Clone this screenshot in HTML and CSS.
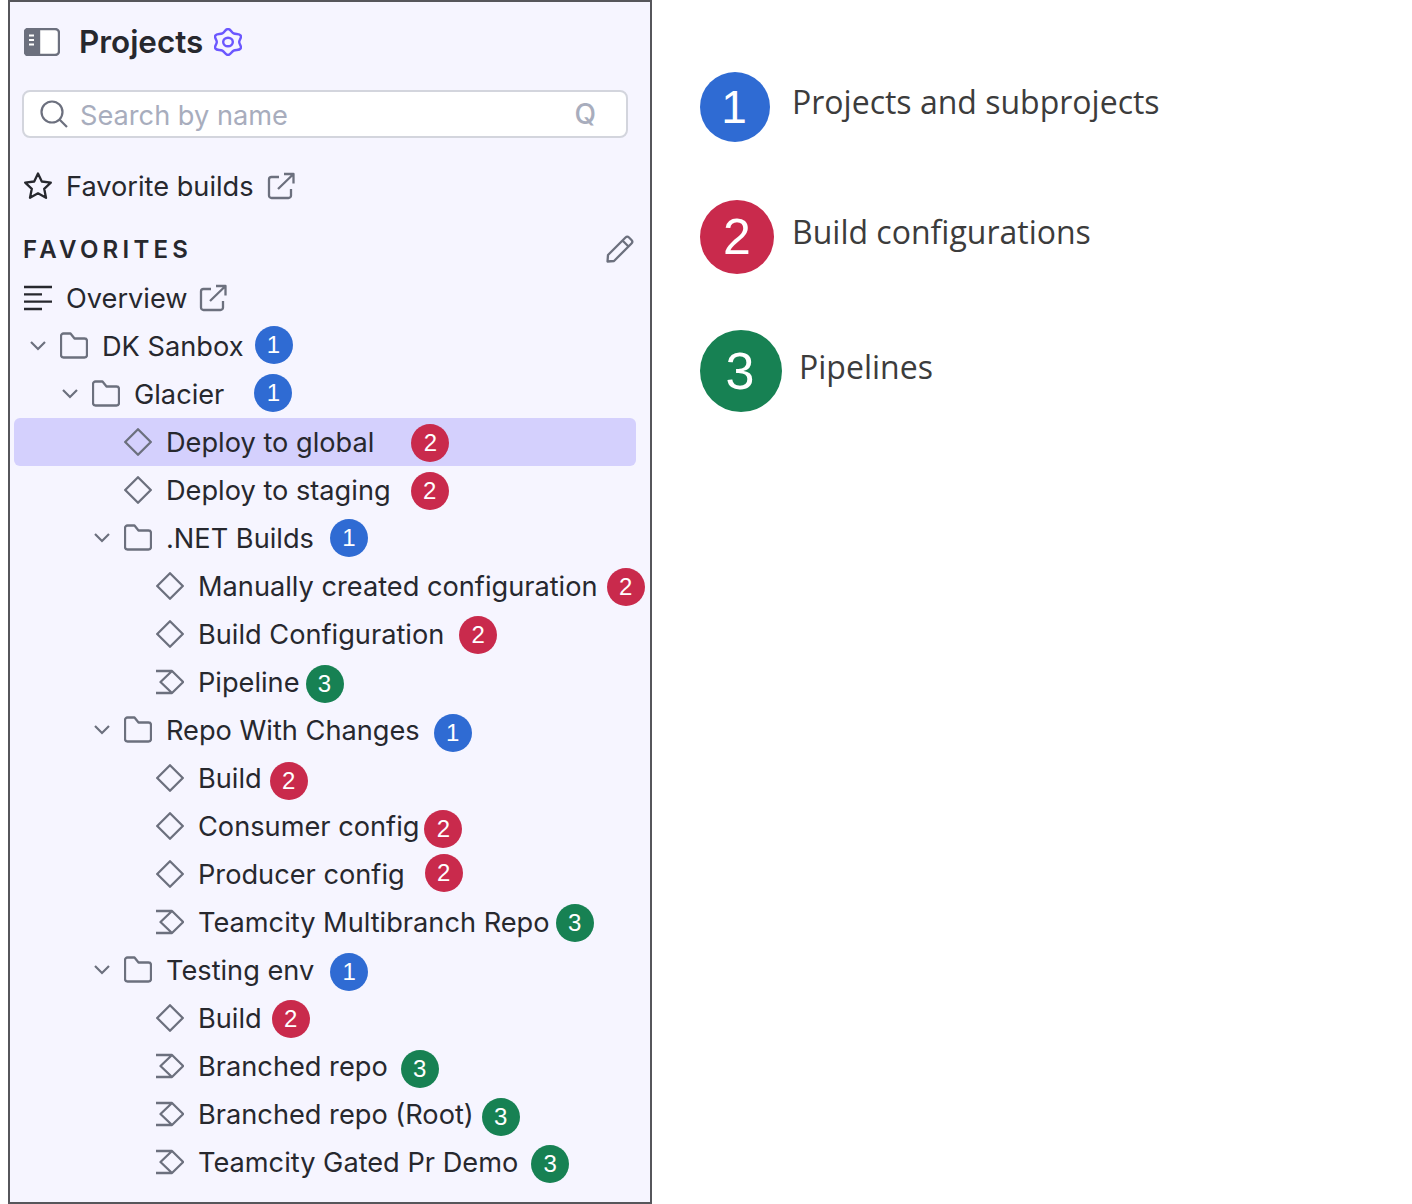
FILE: index.html
```html
<!DOCTYPE html>
<html lang="en">
<head>
<meta charset="utf-8">
<title>Projects</title>
<link rel="stylesheet" href="styles.css">
</head>
<body>
<svg class="defs" width="0" height="0" aria-hidden="true">
  <symbol id="i-diamond" viewBox="0 0 28 28"><path d="M14 1.200 26.800 14 14 26.800 1.200 14Z"/></symbol>
  <symbol id="i-pipe" viewBox="0 0 28 28"><path d="M0 3h16l11.200 11L16 25H0M16 3 4.500 14 16 25"/></symbol>
  <symbol id="i-folder" viewBox="0 0 28 28"><path d="M1 4A2.500 2.500 0 0 1 3.500 1.500H10.500L14.500 6.500H24.500A2.500 2.500 0 0 1 27 9V23a2.500 2.500 0 0 1-2.500 2.500H3.500A2.500 2.500 0 0 1 1 23Z"/></symbol>
  <symbol id="i-chev" viewBox="0 0 16 10"><path d="M1 1l7 7 7-7"/></symbol>
  <symbol id="i-ext" viewBox="0 0 28 28"><path d="M12 5H4.500A2.500 2.500 0 0 0 2 7.500v16A2.500 2.500 0 0 0 4.500 26h17a2.500 2.500 0 0 0 2.500-2.500V17M11 17 26.500 2M17 2h9.500v9.500"/></symbol>
</svg>

<main class="panel">
  <header class="head">
    <svg class="ic-side" viewBox="0 0 36 28"><rect x="1" y="1" width="34" height="26" rx="4" class="side-frame"/><path d="M4 1h11v26H4a3 3 0 0 1-3-3V4a3 3 0 0 1 3-3Z" class="side-fill"/><path d="M5 7.500h5M5 12h5M5 16.500h5" class="side-dots"/></svg>
    <h1 class="title">Projects</h1>
    <svg class="ic-gear" viewBox="-12.500 -14 25 28" preserveAspectRatio="none"><path vector-effect="non-scaling-stroke" d="M0-13C2.500-13 2.830-9.910 5-8.660C7.170-7.410 10.010-8.670 11.260-6.500C12.510-4.330 10-2.500 10 0C10 2.500 12.510 4.330 11.260 6.500C10.010 8.670 7.170 7.410 5 8.660C2.830 9.910 2.500 13 0 13C-2.500 13-2.830 9.910-5 8.660C-7.170 7.410-10.010 8.670-11.260 6.500C-12.510 4.330-10 2.500-10 0C-10-2.500-12.510-4.330-11.260-6.500C-10.010-8.670-7.170-7.410-5-8.660C-2.830-9.910-2.500-13 0-13Z"/><circle vector-effect="non-scaling-stroke" r="4.300"/></svg>
  </header>

  <div class="search">
    <svg class="ic-search" viewBox="0 0 28 28"><circle cx="12" cy="12" r="10.500"/><path d="M19.500 19.500 27 27"/></svg>
    <span class="placeholder">Search by name</span>
    <span class="shortcut">Q</span>
  </div>

  <div class="row top-row">
    <svg class="ic" viewBox="0 0 28 28"><path class="dark" d="M14 1.500l3.800 8 9 1.100-6.600 6.200 1.800 9L14 21.300 6 25.800l1.800-9L1.200 10.600l9-1.100Z"/></svg>
    <span class="label">Favorite builds</span>
    <svg class="ic ext ext-fav"><use href="#i-ext"/></svg>
  </div>

  <div class="section">
    <h2 class="section-title">FAVORITES</h2>
    <svg class="ic-pencil" viewBox="0 0 28 28"><path d="M1.500 26.500l.5-6.500L19.500 2.500a2.500 2.500 0 0 1 3.500 0l2.500 2.500a2.500 2.500 0 0 1 0 3.500L8 26Z M16.500 5.500l6 6"/></svg>
  </div>

  <div class="row top-row">
    <svg class="ic" viewBox="0 0 28 28"><path class="dark" d="M0 3h28M0 10.300h18M0 17.700h28M0 25h18"/></svg>
    <span class="label">Overview</span>
    <svg class="ic ext ext-over"><use href="#i-ext"/></svg>
  </div>

  <div class="row l0"><svg class="chev"><use href="#i-chev"/></svg><svg class="ic"><use href="#i-folder"/></svg><span class="label">DK Sanbox</span><b class="badge blue dx11 up">1</b></div>
  <div class="row l1"><svg class="chev"><use href="#i-chev"/></svg><svg class="ic"><use href="#i-folder"/></svg><span class="label">Glacier</span><b class="badge blue dx30 up">1</b></div>
  <div class="row l2 leaf selected"><svg class="ic"><use href="#i-diamond"/></svg><span class="label">Deploy to global</span><b class="badge red dx37 down">2</b></div>
  <div class="row l2 leaf"><svg class="ic"><use href="#i-diamond"/></svg><span class="label">Deploy to staging</span><b class="badge red dx20 down">2</b></div>
  <div class="row l2"><svg class="chev"><use href="#i-chev"/></svg><svg class="ic"><use href="#i-folder"/></svg><span class="label">.NET Builds</span><b class="badge blue dx16 flat">1</b></div>
  <div class="row l3 leaf"><svg class="ic"><use href="#i-diamond"/></svg><span class="label">Manually created configuration</span><b class="badge red dx9 down">2</b></div>
  <div class="row l3 leaf"><svg class="ic"><use href="#i-diamond"/></svg><span class="label">Build Configuration</span><b class="badge red dx15 down">2</b></div>
  <div class="row l3 leaf"><svg class="ic"><use href="#i-pipe"/></svg><span class="label">Pipeline</span><b class="badge green dx6 down2">3</b></div>
  <div class="row l2"><svg class="chev"><use href="#i-chev"/></svg><svg class="ic"><use href="#i-folder"/></svg><span class="label">Repo With Changes</span><b class="badge blue dx14 down3">1</b></div>
  <div class="row l3 leaf"><svg class="ic"><use href="#i-diamond"/></svg><span class="label">Build</span><b class="badge red dx8 down3">2</b></div>
  <div class="row l3 leaf"><svg class="ic"><use href="#i-diamond"/></svg><span class="label">Consumer config</span><b class="badge red dx5 down3">2</b></div>
  <div class="row l3 leaf"><svg class="ic"><use href="#i-diamond"/></svg><span class="label">Producer config</span><b class="badge red dx20 up">2</b></div>
  <div class="row l3 leaf"><svg class="ic"><use href="#i-pipe"/></svg><span class="label">Teamcity Multibranch Repo</span><b class="badge green dx6 down">3</b></div>
  <div class="row l2"><svg class="chev"><use href="#i-chev"/></svg><svg class="ic"><use href="#i-folder"/></svg><span class="label">Testing env</span><b class="badge blue dx16 down2">1</b></div>
  <div class="row l3 leaf"><svg class="ic"><use href="#i-diamond"/></svg><span class="label">Build</span><b class="badge red dx10 down">2</b></div>
  <div class="row l3 leaf"><svg class="ic"><use href="#i-pipe"/></svg><span class="label">Branched repo</span><b class="badge green dx13 down3">3</b></div>
  <div class="row l3 leaf"><svg class="ic"><use href="#i-pipe"/></svg><span class="label">Branched repo (Root)</span><b class="badge green dx8 down3">3</b></div>
  <div class="row l3 leaf"><svg class="ic"><use href="#i-pipe"/></svg><span class="label">Teamcity Gated Pr Demo</span><b class="badge green dx13 down2">3</b></div>
</main>

<aside class="legend">
  <div class="legend-row first"><b class="dot dot-1 blue">1</b><span class="legend-text">Projects and subprojects</span></div>
  <div class="legend-row second"><b class="dot dot-2 red">2</b><span class="legend-text">Build configurations</span></div>
  <div class="legend-row third"><b class="dot dot-3 green">3</b><span class="legend-text pipelines">Pipelines</span></div>
</aside>
</body>
</html>
```

FILE: styles.css
```css
* { box-sizing: border-box; }
html, body { margin: 0; height: 100%; background: #fff; }
body { display: flex; padding: 0 0 0 8px; font-family: Inter, "Liberation Sans", sans-serif; overflow: hidden; }
.defs { position: absolute; }

.panel {
  width: 644px; height: 1204px; flex: none;
  background: #f6f5ff; border: 2px solid #56565b;
  padding: 16px 14px 0 4px;
  color: #27282e;
}

.head { height: 48px; display: flex; align-items: center; padding-left: 10px; }
.ic-side { width: 36px; height: 28px; flex: none; }
.side-frame { fill: #fff; stroke: #6c707e; stroke-width: 2.400; }
.side-fill { fill: #6c707e; stroke: #6c707e; stroke-width: 2.400; }
.side-dots { stroke: #fff; stroke-width: 2; fill: none; }
.title { margin: 0 0 0 19px; font-size: 31.400px; font-weight: 600; line-height: 48px; }
.ic-gear { width: 28px; height: 28px; margin-left: 11px; fill: none; stroke: #6b57ff; stroke-width: 2.400; }

.search {
  height: 48px; margin: 24px 8px 24px 8px; width: 606px;
  background: #fff; border: 2px solid #d3d5dd; border-radius: 8px;
  display: flex; align-items: center; padding: 0 30px 0 16px;
}
.ic-search { width: 28px; height: 28px; flex: none; fill: none; stroke: #6c707e; stroke-width: 2.200; }
.placeholder { margin: 2px 0 0 12px; font-size: 27.200px; color: #a8adbd; flex: 1; }
.shortcut { font-size: 28px; color: #a8adbd; font-weight: 500; }

.row { height: 48px; display: flex; align-items: center; border-radius: 6px; }
.top-row { padding-left: 10px; }
.l0 { padding-left: 10px; }
.l1 { padding-left: 42px; }
.l2 { padding-left: 74px; }
.l3 { padding-left: 106px; }
.leaf .ic { margin-left: 36px; }
.selected { background: #d4d0fd; }

.chev { width: 16px; height: 10px; flex: none; margin: 0 14px 0 6px; fill: none; stroke: #6c707e; stroke-width: 2.200; }
.ic { width: 28px; height: 28px; flex: none; fill: none; stroke: #6c707e; stroke-width: 2.300; stroke-linejoin: round; }
.ic .dark, .dark { stroke: #27282e; }
.label { margin: 1px 0 0 14px; font-size: 27.200px; line-height: 47px; white-space: nowrap; }
.ext-fav { margin-left: 13px; }
.ext-over { margin-left: 11px; }

.section { height: 48px; margin-top: 16px; display: flex; align-items: center; justify-content: space-between; padding: 0 2px 2px 9px; }
.section-title { margin: 0; font-size: 24px; font-weight: 600; letter-spacing: 4.250px; }
.ic-pencil { width: 28px; height: 28px; fill: none; stroke: #6c707e; stroke-width: 2.300; stroke-linejoin: round; }

.badge {
  width: 38px; height: 38px; flex: none; border-radius: 50%;
  display: flex; align-items: center; justify-content: center;
  color: #fff; font: 400 24px "Liberation Sans", Arial, sans-serif;
}
.blue { background: #2f6bd3; }
.red { background: #c92a4c; }
.green { background: #178153; }
.up { margin-top: -2px; }
.flat { margin-top: 0; }
.down { margin-top: 2px; }
.down2 { margin-top: 4px; }
.down3 { margin-top: 6px; }
.dx5 { margin-left: 5px; }
.dx6 { margin-left: 6px; }
.dx8 { margin-left: 8px; }
.dx9 { margin-left: 9px; }
.dx10 { margin-left: 10px; }
.dx11 { margin-left: 11px; }
.dx13 { margin-left: 13px; }
.dx14 { margin-left: 14px; }
.dx15 { margin-left: 15px; }
.dx16 { margin-left: 16px; }
.dx20 { margin-left: 20px; }
.dx30 { margin-left: 30px; }
.dx37 { margin-left: 37px; }

.legend { padding: 72px 0 0 48px; display: flex; flex-direction: column; }
.legend-row { display: flex; align-items: center; }
.second { margin-top: 58px; }
.third { margin-top: 56px; }
.dot {
  flex: none; border-radius: 50%; display: flex; align-items: center; justify-content: center;
  color: #fff; font-family: "Liberation Sans", Arial, sans-serif; font-weight: 400;
}
.dot-1 { width: 70px; height: 70px; font-size: 46px; padding-right: 2px; }
.dot-2 { width: 74px; height: 74px; font-size: 50px; }
.dot-3 { width: 82px; height: 82px; font-size: 52px; padding-right: 2px; }
.legend-text { font-family: "Open Sans", sans-serif; font-size: 32px; color: #3c3c3c; margin: 0 0 11px 22px; white-space: nowrap; }
.second .legend-text { margin-left: 18px; margin-bottom: 12px; }
.pipelines { margin-left: 17px; margin-bottom: 10px; }
```
